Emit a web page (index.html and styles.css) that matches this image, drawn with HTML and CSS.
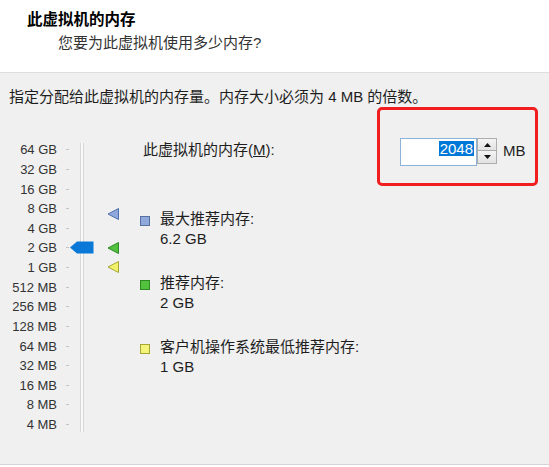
FILE: index.html
```html
<!DOCTYPE html>
<html lang="zh-CN">
<head>
  <meta charset="UTF-8">
  <meta name="viewport" content="width=device-width, initial-scale=1.0">
  <title>此虚拟机的内存</title>
  <link rel="stylesheet" href="styles.css">
</head>
<body>
  <!-- Wizard page header -->
  <div class="header">
    <div class="title">此虚拟机的内存</div>
    <div class="subtitle">您要为此虚拟机使用多少内存?</div>
  </div>

  <div class="content">
    <div class="desc">指定分配给此虚拟机的内存量。内存大小必须为 4 MB 的倍数。</div>

    <div class="main">
      <!-- Memory slider -->
      <div class="slider">
        <ul class="scale">
          <li><span class="label">64 GB</span><span class="tick"></span></li>
          <li><span class="label">32 GB</span><span class="tick"></span></li>
          <li><span class="label">16 GB</span><span class="tick"></span></li>
          <li><span class="label">8 GB</span><span class="tick"></span></li>
          <li><span class="label">4 GB</span><span class="tick"></span></li>
          <li><span class="label">2 GB</span><span class="tick"></span></li>
          <li><span class="label">1 GB</span><span class="tick"></span></li>
          <li><span class="label">512 MB</span><span class="tick"></span></li>
          <li><span class="label">256 MB</span><span class="tick"></span></li>
          <li><span class="label">128 MB</span><span class="tick"></span></li>
          <li><span class="label">64 MB</span><span class="tick"></span></li>
          <li><span class="label">32 MB</span><span class="tick"></span></li>
          <li><span class="label">16 MB</span><span class="tick"></span></li>
          <li><span class="label">8 MB</span><span class="tick"></span></li>
          <li><span class="label">4 MB</span><span class="tick"></span></li>
        </ul>
        <div class="track"></div>
        <svg class="thumb" width="24" height="13" viewBox="0 0 24 13">
          <polygon points="0,6.5 7,0.5 23.5,0.5 23.5,12.5 7,12.5" fill="#0a78d7"/>
        </svg>
        <svg class="mark mark-max" width="13" height="12" viewBox="0 0 13 12">
          <polygon points="1,6 11.5,0.5 11.5,11.5" fill="#8fa9dd" stroke="#4f6fae"/>
        </svg>
        <svg class="mark mark-rec" width="13" height="12" viewBox="0 0 13 12">
          <polygon points="1,6 11.5,0.5 11.5,11.5" fill="#52c13e" stroke="#2f8a24"/>
        </svg>
        <svg class="mark mark-min" width="13" height="12" viewBox="0 0 13 12">
          <polygon points="1,6 11.5,0.5 11.5,11.5" fill="#f2f26a" stroke="#a6a634"/>
        </svg>
      </div>

      <div class="info">
        <div class="mem-label">此虚拟机的内存(<u>M</u>):</div>
        <div class="legend">
          <div class="legend-item">
            <span class="swatch swatch-max"></span>
            <div>
              <div>最大推荐内存:</div>
              <div>6.2 GB</div>
            </div>
          </div>
          <div class="legend-item">
            <span class="swatch swatch-rec"></span>
            <div>
              <div>推荐内存:</div>
              <div>2 GB</div>
            </div>
          </div>
          <div class="legend-item">
            <span class="swatch swatch-min"></span>
            <div>
              <div>客户机操作系统最低推荐内存:</div>
              <div>1 GB</div>
            </div>
          </div>
        </div>
      </div>

      <!-- Memory size spin box (highlighted) -->
      <div class="highlight">
        <div class="spin-input"><span class="selected">2048</span></div>
        <div class="spin-buttons">
          <div class="spin-btn">
            <svg width="7" height="4" viewBox="0 0 7 4"><polygon points="0,4 3.5,0 7,4" fill="#111"/></svg>
          </div>
          <div class="spin-btn">
            <svg width="7" height="4" viewBox="0 0 7 4"><polygon points="0,0 7,0 3.5,4" fill="#111"/></svg>
          </div>
        </div>
        <span class="unit">MB</span>
      </div>
    </div>
  </div>
</body>
</html>
```

FILE: styles.css
```css
body {
  margin: 0;
  background: #ffffff;
  font-family: "Liberation Sans", "Noto Sans CJK SC", sans-serif;
  font-size: 15px;
  color: #1e1e1e;
}

/* Header */
.header {
  height: 62px;
  padding: 10px 0 0 27px;
  background: #ffffff;
  border-bottom: 1px solid #dedede;
}

.title {
  font-weight: bold;
  font-size: 15.5px;
  line-height: 20px;
  color: #000000;
}

.subtitle {
  margin-top: 3px;
  padding-left: 31px;
  line-height: 20px;
  color: #333333;
}

/* Body of the page */
.content {
  height: 377px;
  padding-top: 14px;
  background: #f0f0f0;
  border-bottom: 1px solid #d4d4d4;
}

.desc {
  padding-left: 9px;
  line-height: 20px;
}

.main {
  display: flex;
  align-items: flex-start;
}

/* Slider */
.slider {
  position: relative;
  width: 139px;
  margin-top: 33px;
}

.scale {
  list-style: none;
  margin: 0;
  padding: 0;
}

.scale li {
  display: flex;
  align-items: center;
  height: 19.64px;
}

.label {
  width: 57px;
  text-align: right;
  font-size: 13px;
  color: #333333;
}

.tick {
  width: 3px;
  height: 1px;
  margin-left: 9px;
  background: #c4c4c4;
}

.track {
  position: absolute;
  left: 80px;
  top: 3px;
  width: 2px;
  height: 289px;
  background: #fafafa;
  border-left: 1px solid #d6d6d6;
  border-right: 1px solid #d6d6d6;
}

.thumb {
  position: absolute;
  left: 70px;
  top: 101px;
}

.mark {
  position: absolute;
  left: 107px;
}

.mark-max { top: 68px; }
.mark-rec { top: 102px; }
.mark-min { top: 121px; }

/* Legend */
.info {
  margin-top: 33px;
}

.mem-label {
  padding-left: 4px;
  line-height: 20px;
}

.legend {
  display: flex;
  flex-direction: column;
  gap: 24px;
  margin-top: 49px;
}

.legend-item {
  display: flex;
  align-items: flex-start;
  line-height: 20px;
}

.swatch {
  width: 8px;
  height: 8px;
  margin: 7px 10px 0 1px;
  border: 1px solid;
}

.swatch-max { background: #8fa9dd; border-color: #56719f; }
.swatch-rec { background: #52c13e; border-color: #2f8a24; }
.swatch-min { background: #f4f47a; border-color: #a6a634; }

/* Spin box */
.highlight {
  display: flex;
  align-items: flex-start;
  width: 135px;
  height: 45px;
  margin: 0 11px 0 auto;
  padding: 28px 0 0 20px;
  border: 3px solid #f01e1e;
  border-radius: 5px;
}

.spin-input {
  display: flex;
  justify-content: flex-end;
  align-items: flex-start;
  box-sizing: border-box;
  width: 77px;
  height: 28px;
  padding: 2px 2px 0 0;
  background: #ffffff;
  border: 1px solid #8db2d8;
}

.selected {
  line-height: 15px;
  padding: 0 1px;
  background: #0078d7;
  color: #ffffff;
}

.spin-buttons {
  display: flex;
  flex-direction: column;
}

.spin-btn {
  display: flex;
  justify-content: center;
  align-items: center;
  box-sizing: border-box;
  width: 20px;
  height: 13px;
  background: linear-gradient(#f4f4f4, #e2e2e2);
  border: 1px solid #adadad;
}

.spin-btn + .spin-btn {
  border-top: none;
}

.unit {
  margin: 3px 0 0 6px;
  line-height: 20px;
}
```
